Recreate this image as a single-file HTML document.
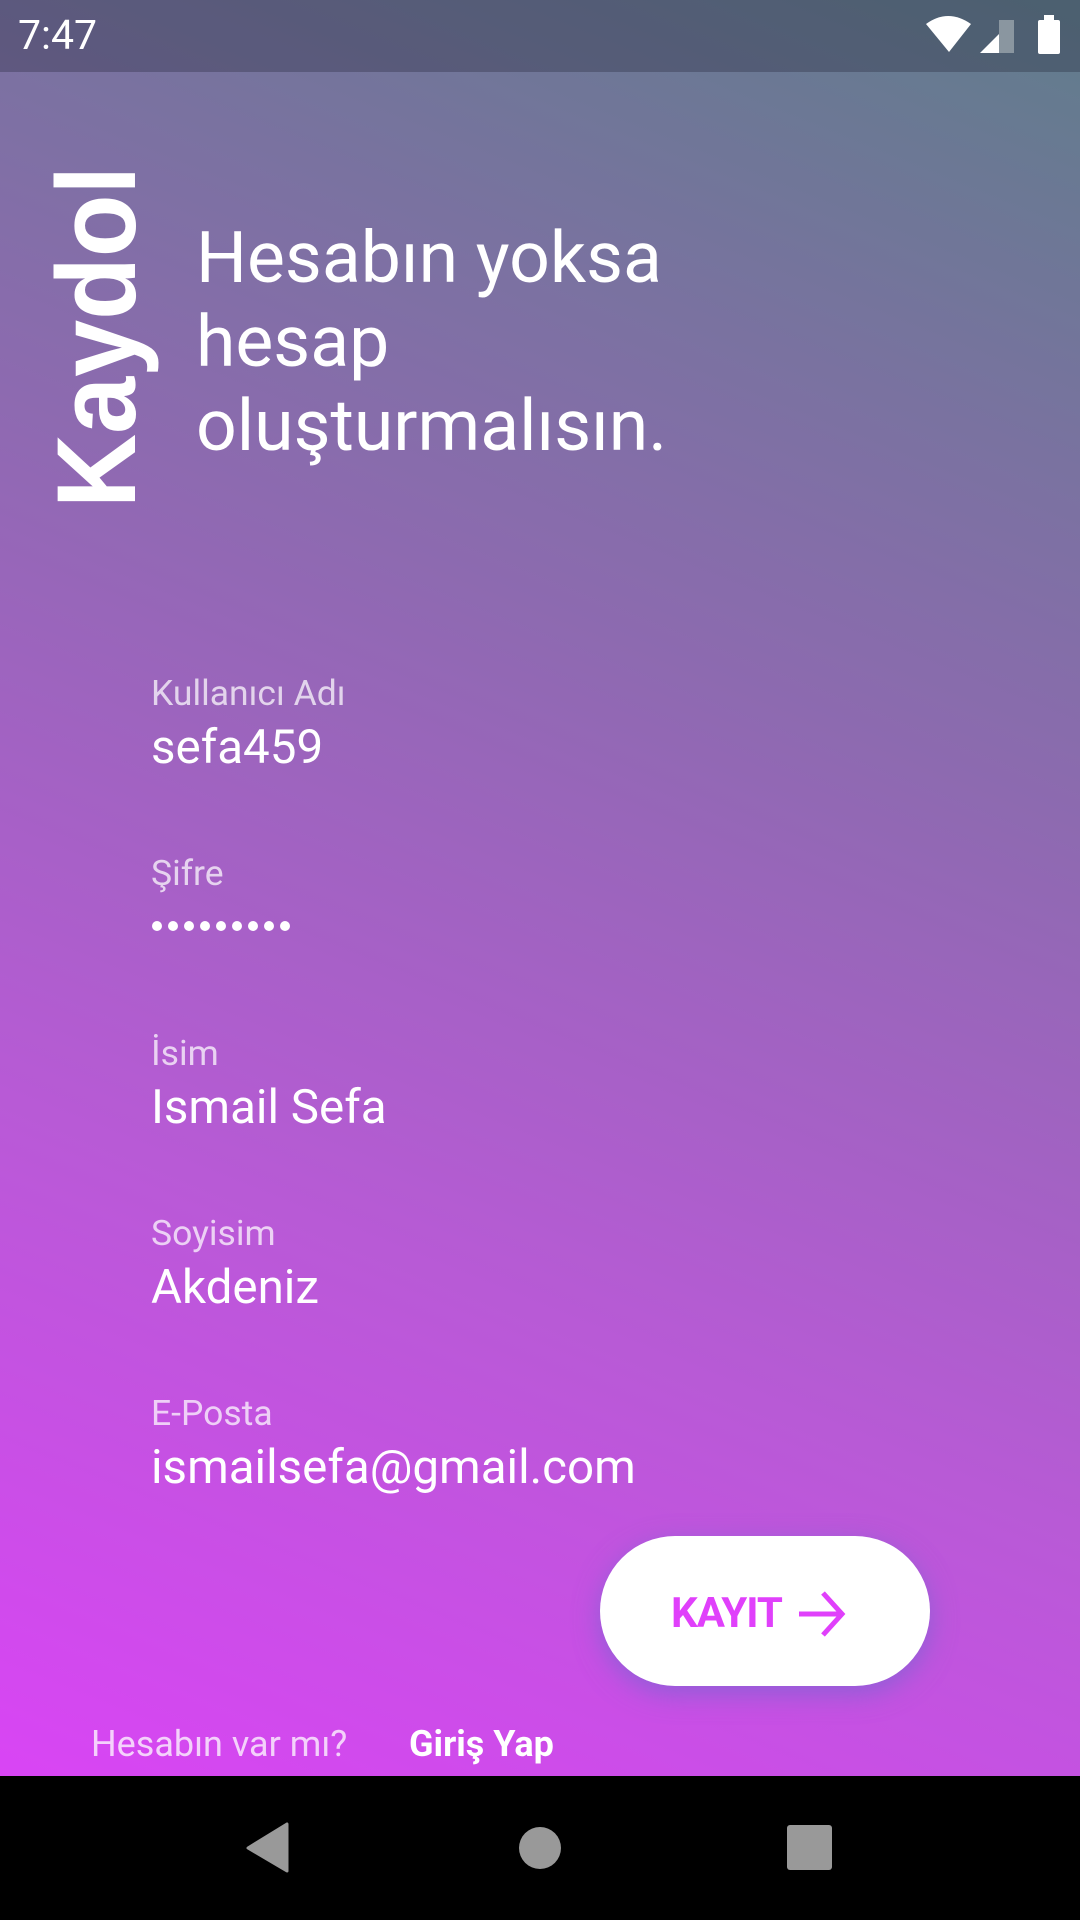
<!DOCTYPE html>
<html><head><meta charset="utf-8"><style>
*{margin:0;padding:0;box-sizing:border-box}
body{width:1080px;height:1920px;overflow:hidden;position:relative;font-family:"Roboto","Liberation Sans",sans-serif;color:#fff;
background:linear-gradient(22deg,#e040fb 0%,#b85ad6 35%,#8d6ab0 65%,#607d8b 100%);}
.sb{position:absolute;left:0;top:0;width:1080px;height:72px;background:rgba(30,30,50,0.3)}
.time{position:absolute;left:18px;top:12px;font-size:41px;line-height:48px}
.t{position:absolute;white-space:nowrap}
.lbl{font-size:35.5px;color:rgba(255,255,255,0.72);left:151px}
.val{font-size:47.5px;left:151px}
.head{position:absolute;left:196px;top:217px;font-size:71.5px;line-height:84px}
.btn{position:absolute;left:600px;top:1536px;width:330px;height:150px;border-radius:75px;background:#fff;box-shadow:0 8px 26px rgba(120,100,210,0.7)}
.nav{position:absolute;left:0;top:1776px;width:1080px;height:144px;background:#000}
</style></head><body>
<div class="sb"></div>
<div class="time">7:47</div>
<svg style="position:absolute;left:0;top:0" width="1080" height="72">
<path d="M926 24 Q948 8 971 24 L949 52 Z" fill="#fff"/>
<path d="M999 20 L1014 20 L1014 53 L999 53 Z" fill="#8a96a0"/>
<path d="M999 34 L999 53 L980 53 Z" fill="#fff"/>
<rect x="1038" y="20" width="22" height="34" rx="2" fill="#fff"/>
<rect x="1044" y="15" width="10" height="6" fill="#fff"/>
</svg>
<svg style="position:absolute;left:0;top:0" width="200" height="560">
<text transform="translate(135,508) rotate(-90)" font-family="Liberation Sans,sans-serif" font-weight="bold" font-size="112" fill="#fff" textLength="342" lengthAdjust="spacingAndGlyphs">Kaydol</text>
</svg>
<div class="head">Hesabın yoksa<br>hesap<br>oluşturmalısın.</div>

<div class="t lbl" style="top:672px">Kullanıcı Adı</div>
<div class="t val" style="top:719px">sefa459</div>
<div class="t lbl" style="top:852px">Şifre</div>
<svg style="position:absolute;left:151px;top:916px" width="150" height="20">
<g fill="#fff"><circle cx="6" cy="10" r="5"/><circle cx="22" cy="10" r="5"/><circle cx="38" cy="10" r="5"/><circle cx="54" cy="10" r="5"/><circle cx="70" cy="10" r="5"/><circle cx="86" cy="10" r="5"/><circle cx="102" cy="10" r="5"/><circle cx="118" cy="10" r="5"/><circle cx="134" cy="10" r="5"/></g>
</svg>
<div class="t lbl" style="top:1032px">İsim</div>
<div class="t val" style="top:1079px">Ismail Sefa</div>
<div class="t lbl" style="top:1212px">Soyisim</div>
<div class="t val" style="top:1259px">Akdeniz</div>
<div class="t lbl" style="top:1392px">E-Posta</div>
<div class="t val" style="top:1439px">ismailsefa@gmail.com</div>

<div class="btn"></div>
<div class="t" style="left:671px;top:1589px;font-size:42px;font-weight:bold;color:#e040fb;letter-spacing:-1px">KAYIT</div>
<svg style="position:absolute;left:795px;top:1588px" width="56" height="52"><path d="M4 26 H46 M28 5 L47 26 L28 47" stroke="#e040fb" stroke-width="5" fill="none"/></svg>

<div class="t" style="left:91px;top:1723px;font-size:36px;color:rgba(255,255,255,0.75)">Hesabın var mı?</div>
<div class="t" style="left:409px;top:1723px;font-size:36px;font-weight:bold">Giriş Yap</div>

<div class="nav"></div>
<svg style="position:absolute;left:0;top:1776px" width="1080" height="144">
<path d="M287 48 L287 95 L248 72 Z" fill="#999" stroke="#999" stroke-width="3" stroke-linejoin="round"/>
<circle cx="540" cy="72" r="21" fill="#999"/>
<rect x="787" y="49" width="45" height="45" rx="3" fill="#999"/>
</svg>
</body></html>
